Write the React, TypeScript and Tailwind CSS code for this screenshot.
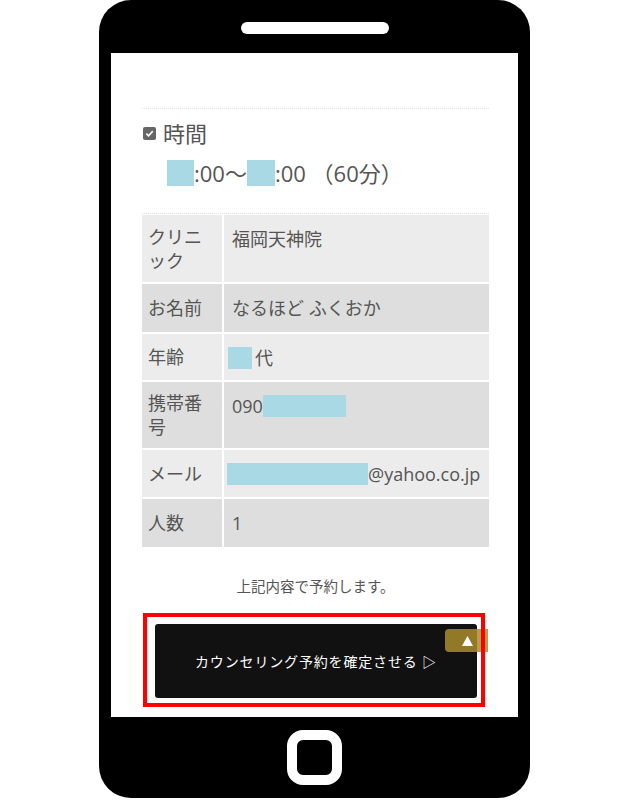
import React from 'react';

const rows = [
  { label: 'クリニック', h: 'h-[67px]', bg: 'bg-[#ececec]', value: <span>福岡天神院</span> },
  { label: 'お名前', h: 'h-[48px]', bg: 'bg-[#dedede]', value: <span>なるほど ふくおか</span> },
  {
    label: '年齢',
    h: 'h-[46px]',
    bg: 'bg-[#ececec]',
    value: (
      <span className="flex items-center">
        <span className="-ml-[4px] w-[24px] h-[22px] bg-[#a8d9e5]" />
        <span className="ml-[3px]">代</span>
      </span>
    ),
  },
  {
    label: '携帯番号',
    h: 'h-[66px]',
    bg: 'bg-[#dedede]',
    value: (
      <span className="flex items-center">
        <span>090</span>
        <span className="w-[83px] h-[22px] bg-[#a8d9e5]" />
      </span>
    ),
  },
  {
    label: 'メール',
    h: 'h-[47px]',
    bg: 'bg-[#ececec]',
    value: (
      <span className="flex items-center whitespace-nowrap">
        <span className="-ml-[5px] w-[141px] h-[22px] bg-[#a8d9e5] shrink-0" />
        <span>@yahoo.co.jp</span>
      </span>
    ),
  },
  { label: '人数', h: 'h-[48px]', bg: 'bg-[#dedede]', value: <span>1</span> },
];

export default function App() {
  return (
    <div
      className="w-[630px] h-[800px] bg-white text-[#555]"
      style={{ fontFamily: '"Open Sans", "Noto Sans CJK JP", sans-serif' }}
    >
      <div className="ml-[99px] w-[431px] h-[798px] bg-black rounded-[32px] flex flex-col items-center">
        {/* speaker */}
        <div className="mt-[22px] w-[148px] h-[12px] rounded-full bg-white" />

        {/* screen */}
        <div className="mt-[19px] w-[407px] h-[664px] bg-white pl-[31px] pr-[29px] pt-[55px] relative">
          <div className="border-t border-dotted border-[#e2e2e2]" />

          <div className="mt-[9px] h-[30px] flex items-center gap-[7px] ml-[1px]">
            <div className="w-[13px] h-[13px] rounded-[2px] bg-[#666] flex items-center justify-center">
              <svg width="9" height="9" viewBox="0 0 10 10">
                <path d="M1.5 5.2 L4 7.6 L8.6 2.4" fill="none" stroke="white" strokeWidth="1.8" />
              </svg>
            </div>
            <span className="text-[22px] leading-none">時間</span>
          </div>

          <div className="mt-[12px] ml-[25px] h-[26px] flex items-center text-[22px] leading-none whitespace-nowrap">
            <span className="w-[27px] h-[26px] bg-[#a8d9e5] shrink-0" />
            <span>:00〜</span>
            <span className="w-[28px] h-[26px] bg-[#a8d9e5] shrink-0" />
            <span>:00 （60分）</span>
          </div>

          <div className="mt-[27px] border-t border-dotted border-[#e2e2e2]" />

          <div className="mt-[1px] grid grid-cols-[80px_1fr] gap-[2px] text-[18px]">
            {rows.map((r) => (
              <React.Fragment key={r.label}>
                <div className={`${r.h} ${r.bg} flex items-center pl-[6px] pr-[12px] leading-[24px]`}>
                  {r.label}
                </div>
                <div className={`${r.h} ${r.bg} pl-[8px] pt-[12px] leading-[24px]`}>{r.value}</div>
              </React.Fragment>
            ))}
          </div>

          <p className="mt-[30px] text-center text-[14.5px] leading-[20px]">上記内容で予約します。</p>

          <div className="mt-[16px] ml-[1px] w-[342px] h-[94px] relative pl-[12px] pt-[11px]">
            <button className="w-[322px] h-[74px] bg-[#111] rounded-[3px] text-white text-[14px] tracking-[0.06em] flex items-center justify-center">
              カウンセリング予約を確定させる ▷
            </button>
            <div className="absolute left-[302px] top-[16px] w-[43px] h-[23px] rounded-l-[4px] bg-[#a88c2c]/85 z-10 flex items-center justify-start pl-[17px]">
              <svg width="11" height="10" viewBox="0 0 11 10">
                <path d="M5.5 0 L11 10 L0 10 Z" fill="white" />
              </svg>
            </div>
            <div className="absolute inset-0 border-4 border-[#ff0000] z-20 pointer-events-none" />
          </div>
        </div>

        {/* home button */}
        <div className="mt-[13px] w-[55px] h-[55px] border-[10px] border-white rounded-[16px]" />
      </div>
    </div>
  );
}
